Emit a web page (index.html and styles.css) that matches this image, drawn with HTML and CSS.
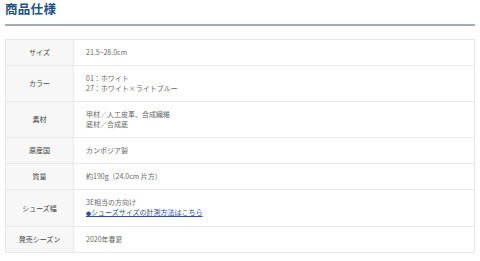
FILE: index.html
```html
<!DOCTYPE html>
<html lang="ja">
<head>
<meta charset="utf-8">
<link rel="stylesheet" href="styles.css">
</head>
<body>
<div class="page">
  <h2 class="title">商品仕様</h2>
  <table class="spec">
    <tr><th>サイズ</th><td>21.5~28.0cm</td></tr>
    <tr><th>カラー</th><td>01：ホワイト<br>27：ホワイト×ライトブルー</td></tr>
    <tr><th>素材</th><td>甲材／人工皮革、合成繊維<br>底材／合成底</td></tr>
    <tr><th>原産国</th><td>カンボジア製</td></tr>
    <tr><th>質量</th><td>約190g（24.0cm 片方）</td></tr>
    <tr><th>シューズ幅</th><td>3E相当の方向け<br><a class="link" href="#"><span class="dot">●</span>シューズサイズの計測方法はこちら</a></td></tr>
    <tr><th>発売シーズン</th><td>2020年春夏</td></tr>
  </table>
</div>
</body>
</html>
```
FILE: styles.css
```css
html, body {
  margin: 0;
  padding: 0;
  background: #ffffff;
}
.page {
  width: 470px;
  padding: 0 5px;
  font-family: "Noto Sans CJK JP", "Liberation Sans", sans-serif;
}
.title {
  margin: 0;
  padding-top: 2px;
  height: 22px;
  font-size: 12.5px;
  line-height: 14px;
  font-weight: 700;
  color: #1d4f8a;
  border-bottom: 2px solid #a3acb6;
  letter-spacing: 0.3px;
}
.spec {
  margin-top: 13px;
  width: 470px;
  border-collapse: collapse;
  font-size: 7px;
  line-height: 10px;
}
.spec th, .spec td {
  border: 1px solid #e8e8e8;
  padding: 7px 0 8px;
  vertical-align: middle;
}
.spec tr {
  height: 26px;
}
.spec tr.two {
  height: 36px;
}
.spec th {
  width: 67px;
  background: #f7f7f7;
  color: #444444;
  font-weight: 400;
  text-align: center;
}
.spec td {
  padding-left: 12px;
  color: #666666;
  text-align: left;
}
.link {
  color: #2c4fa0;
  text-decoration: underline;
}
.dot {
  font-size: 5px;
}
```
